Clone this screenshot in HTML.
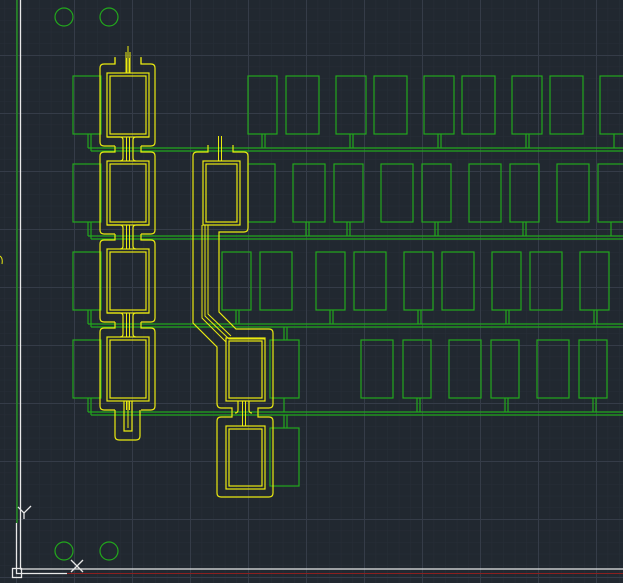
<!DOCTYPE html>
<html><head><style>
html,body{margin:0;padding:0;background:#212830;overflow:hidden}
svg{display:block}
</style></head><body>
<svg width="623" height="583" viewBox="0 0 623 583" xmlns="http://www.w3.org/2000/svg">
<defs>
<pattern id="minor" width="11.6" height="11.6" patternUnits="userSpaceOnUse" x="4.4" y="8.6">
<path d="M0,0 H11.6 M0,0 V11.6" stroke="#272e38" stroke-width="1" fill="none"/>
</pattern>
<pattern id="major" width="58" height="58" patternUnits="userSpaceOnUse" x="16" y="-3">
<path d="M0.5,0 V58 M0,0.5 H58" stroke="#353c48" stroke-width="1" fill="none"/>
</pattern>
<g id="lcell" fill="none" stroke="#eaea10" stroke-width="1.2">
<rect x="110" y="0" width="36" height="58"/>
<rect x="107" y="-3" width="42" height="64"/>
<path d="M115,-18 V-12 H104 Q100,-12 100,-8 V66 Q100,70 104,70 H115"/>
<path d="M141,-18 V-12 H151 Q155,-12 155,-8 V66 Q155,70 151,70 H141"/>
<path d="M126.5,-18 V-3 M129.5,-18 V-3 M126.5,61 V70 M129.5,61 V70" stroke-width="1"/>
</g>
<g id="neck" fill="none" stroke="#eaea10" stroke-width="1.2">
<path d="M107,-27 Q107,-27 120,-27 Q123,-27 123,-24 V-6 Q123,-3 120,-3"/>
<path d="M149,-27 H136 Q133,-27 133,-24 V-6 Q133,-3 136,-3"/>
</g>
</defs>
<rect width="623" height="583" fill="#212830"/>
<rect width="623" height="583" fill="url(#minor)"/>
<rect width="623" height="583" fill="url(#major)"/>

<g fill="none" stroke="#22a81c" stroke-width="1.2">
<circle cx="64" cy="17" r="9"/><circle cx="109" cy="17" r="9"/>
<circle cx="64" cy="551" r="9"/><circle cx="109" cy="551" r="9"/>
<rect x="73" y="76" width="28" height="58"/>
<rect x="248" y="76" width="29" height="58"/><rect x="286" y="76" width="33" height="58"/>
<rect x="336" y="76" width="30" height="58"/><rect x="374" y="76" width="33" height="58"/>
<rect x="424" y="76" width="30" height="58"/><rect x="462" y="76" width="33" height="58"/>
<rect x="512" y="76" width="30" height="58"/><rect x="550" y="76" width="33" height="58"/>
<rect x="600" y="76" width="30" height="58"/>
<path d="M88,148 H623 M91,151 H623 M88,134 V148 M91,134 V151"/>
<path d="M262,134 V148 M265,134 V148 M350,134 V148 M353,134 V148 M438,134 V148 M441,134 V148 M526,134 V148 M529,134 V148 M614,134 V148"/>
<rect x="73" y="164" width="28" height="58"/>
<rect x="248" y="164" width="27" height="58"/><rect x="293" y="164" width="32" height="58"/>
<rect x="334" y="164" width="29" height="58"/><rect x="381" y="164" width="32" height="58"/>
<rect x="422" y="164" width="29" height="58"/><rect x="469" y="164" width="32" height="58"/>
<rect x="510" y="164" width="29" height="58"/><rect x="557" y="164" width="32" height="58"/>
<rect x="598" y="164" width="30" height="58"/>
<path d="M88,236 H623 M91,239 H623 M88,222 V236 M91,222 V239"/>
<path d="M306,222 V236 M309,222 V236 M347,222 V236 M350,222 V236 M435,222 V236 M438,222 V236 M523,222 V236 M526,222 V236 M611,222 V236"/>
<rect x="73" y="252" width="28" height="58"/>
<rect x="222" y="252" width="29" height="58"/><rect x="260" y="252" width="32" height="58"/>
<rect x="316" y="252" width="29" height="58"/><rect x="354" y="252" width="32" height="58"/>
<rect x="404" y="252" width="29" height="58"/><rect x="442" y="252" width="32" height="58"/>
<rect x="492" y="252" width="29" height="58"/><rect x="530" y="252" width="32" height="58"/>
<rect x="580" y="252" width="29" height="58"/>
<path d="M88,324 H623 M91,327 H623 M88,310 V324 M91,310 V327"/>
<path d="M236,310 V324 M239,310 V324 M330,310 V324 M333,310 V324 M418,310 V324 M421,310 V324 M506,310 V324 M509,310 V324 M594,310 V324 M597,310 V324"/>
<rect x="73" y="340" width="28" height="58"/>
<rect x="270" y="340" width="29" height="58"/>
<rect x="361" y="340" width="32" height="58"/><rect x="403" y="340" width="28" height="58"/>
<rect x="449" y="340" width="32" height="58"/><rect x="491" y="340" width="28" height="58"/>
<rect x="537" y="340" width="32" height="58"/><rect x="579" y="340" width="28" height="58"/>
<path d="M88,412 H623 M91,415 H623 M88,398 V412 M91,398 V415"/>
<path d="M284,327 V340 M287,327 V340 M284,398 V412 M417,398 V412 M420,398 V412 M505,398 V412 M508,398 V412 M593,398 V412 M596,398 V412"/>
<rect x="270" y="428" width="29" height="58"/>
<path d="M284,415 V428 M287,415 V428"/>
<path d="M17,0 V523"/>
</g>

<use href="#lcell" y="76"/>
<use href="#lcell" y="164"/>
<use href="#lcell" y="252"/>
<use href="#lcell" y="340"/>
<use href="#neck" y="164"/>
<use href="#neck" y="252"/>
<use href="#neck" y="340"/>
<g fill="none" stroke="#eaea10" stroke-width="1.2">
<path d="M128,46 V73" stroke-width="1"/>
<path d="M126,52 V73 M130,52 V73" stroke-width="1"/>
<path d="M115,57 V64 M141,57 V64"/>
<path d="M115,410 V436 Q115,440 119,440 H136 Q140,440 140,436 V410"/>
<path d="M124,401 V431 H132 V401" />
<path d="M128,401 V428" stroke-width="1"/>
</g>

<g fill="none" stroke="#eaea10" stroke-width="1.2">
<rect x="206" y="164" width="31" height="58"/>
<rect x="203" y="161" width="37" height="64"/>
<path d="M218.5,136 V161 M221.5,136 V161" stroke-width="1"/>
<path d="M208,145 V152 H197 Q193,152 193,156 V323 L217,347 V403 Q217,408 221,408 H232 V417 H221 Q217,417 217,421 V493 Q217,497 221,497 H269 Q273,497 273,493 V421 Q273,417 269,417 H258 V408 H269 Q273,408 273,404 V333 Q273,329 269,329 H236 L219,312 V232 H244 Q248,232 248,228 V156 Q248,152 244,152 H233 V145"/>
<path d="M202,225 V318 L226,342 M205,225 V316 L229,339 H265 M208,225 V314 L231,336" stroke-width="1"/>
<rect x="229" y="341" width="33" height="57"/>
<rect x="226" y="338" width="39" height="63"/>
<path d="M242.5,401 V426 M245.5,401 V426" stroke-width="1"/>
<path d="M238,401 V410 Q238,413 235,413 M249,401 V410 Q249,413 252,413"/>
<rect x="229" y="429" width="33" height="57"/>
<rect x="226" y="426" width="39" height="63"/>
</g>

<g fill="none" stroke="#e8e8e8" stroke-width="1.3">
<path d="M20.5,0 V569 H623"/>
<path d="M16.5,523 V573.5 H67"/>
<rect x="12.5" y="568.5" width="9" height="9"/>
<path d="M18,507 L24,513 L31,506 M24,513 V519"/>
<path d="M71,560 L83,572 M83,560 L71,572"/>
</g>
<path d="M67,573.5 H623" stroke="#8a2020" stroke-width="1"/>
<path d="M0,256 Q3,258 2,264" stroke="#eaea10" fill="none" stroke-width="1"/>
</svg>
</body></html>
